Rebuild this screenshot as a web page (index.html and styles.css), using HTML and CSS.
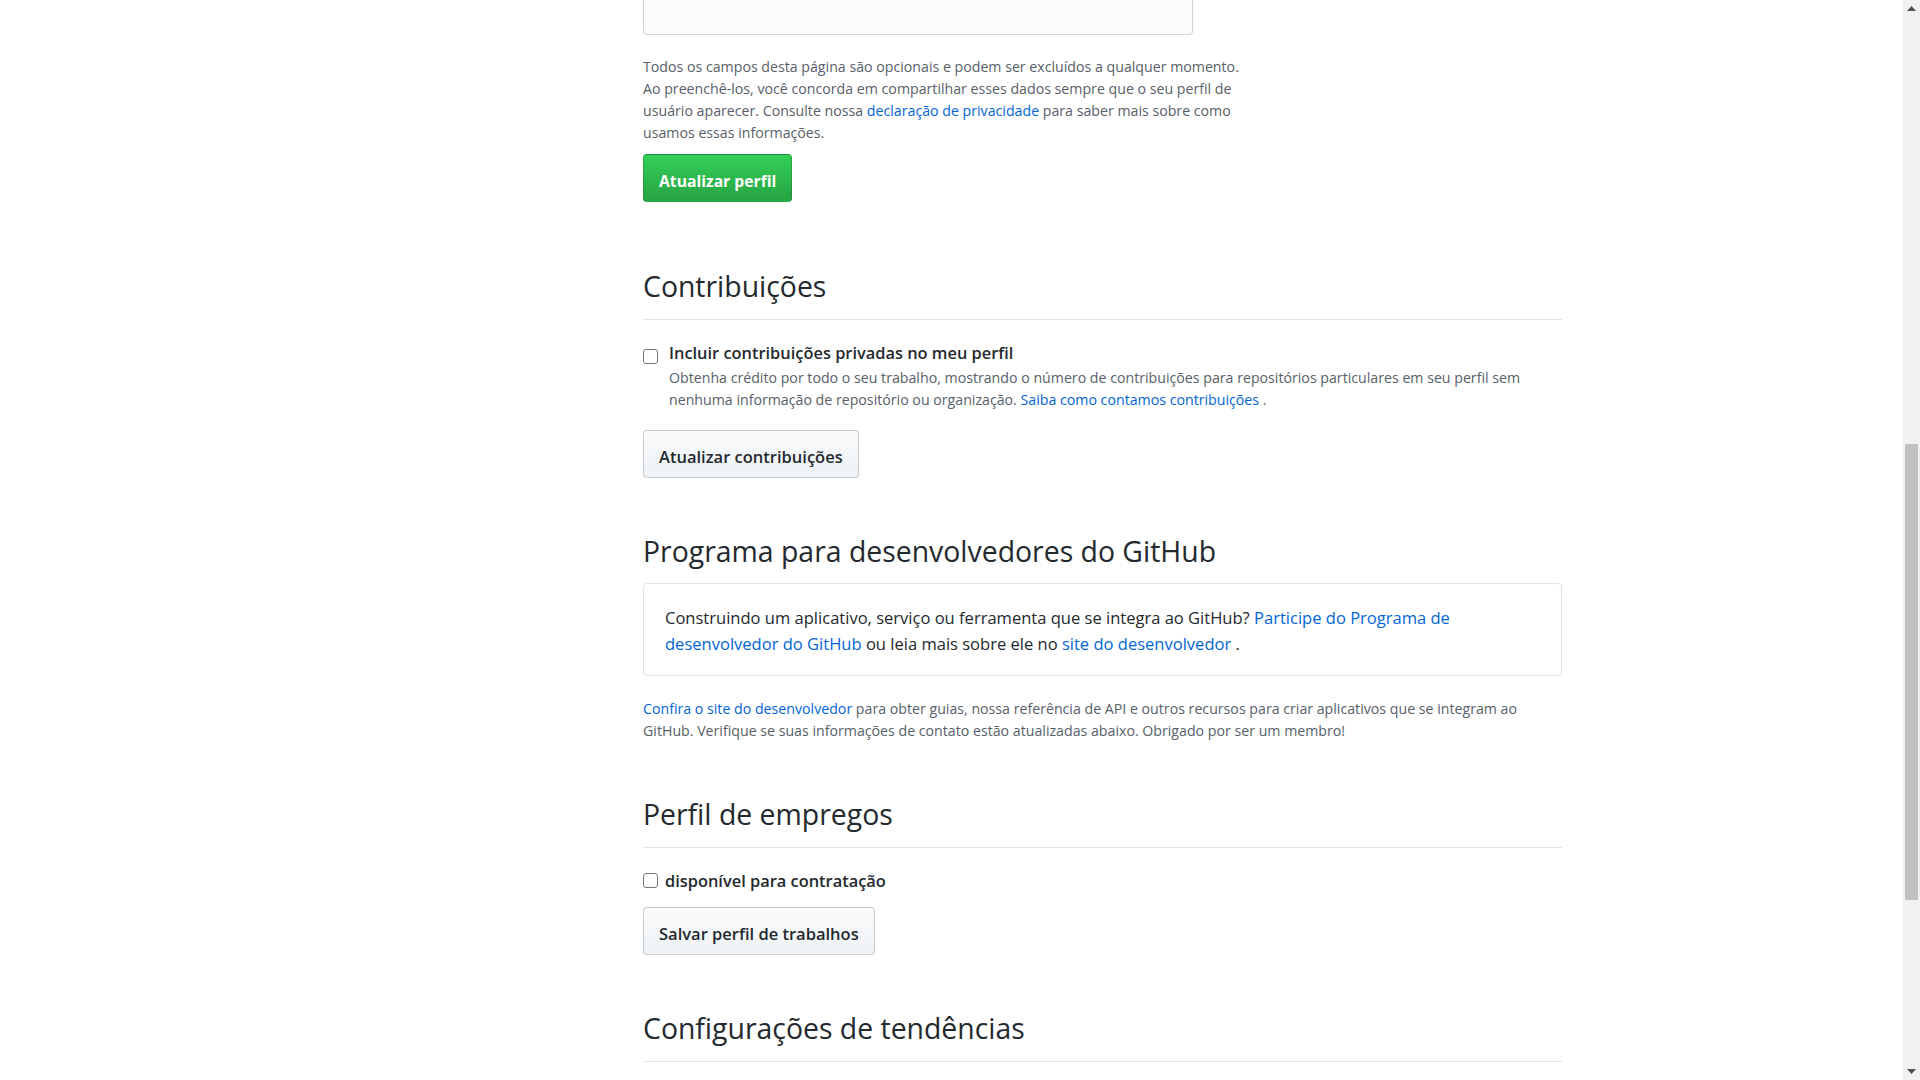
FILE: index.html
```html
<!DOCTYPE html>
<html lang="pt-BR">
<head>
<meta charset="utf-8">
<title>Configurações do perfil</title>
<link rel="stylesheet" href="styles.css">
</head>
<body>
<div class="window">
  <div class="page">
    <div class="layout">
      <div class="sidebar"></div>
      <main class="main">
        <div class="field-tail"></div>
        <p class="note first-note">Todos os campos desta página são opcionais e podem ser excluídos a qualquer momento.<br>Ao preenchê-los, você concorda em compartilhar esses dados sempre que o seu perfil de<br>usuário aparecer. Consulte nossa <a href="#">declaração de privacidade</a> para saber mais sobre como<br>usamos essas informações.</p>
        <button class="btn btn-primary btn-update">Atualizar perfil</button>

        <h2 class="subhead sec-contrib">Contribuições</h2>
        <div class="check-row">
          <input type="checkbox" class="checkbox">
          <div class="check-body">
            <label class="check-label">Incluir contribuições privadas no meu perfil</label>
            <p class="note desc">Obtenha crédito por todo o seu trabalho, mostrando o número de contribuições para repositórios particulares em seu perfil sem<br>nenhuma informação de repositório ou organização. <a href="#">Saiba como contamos contribuições</a> .</p>
          </div>
        </div>
        <button class="btn btn-contrib">Atualizar contribuições</button>

        <h2 class="subhead plain sec-dev">Programa para desenvolvedores do GitHub</h2>
        <div class="box">Construindo um aplicativo, serviço ou ferramenta que se integra ao GitHub? <a href="#">Participe do Programa de<br>desenvolvedor do GitHub</a> ou leia mais sobre ele no <a href="#">site do desenvolvedor</a> .</div>
        <p class="note dev-note"><a href="#">Confira o site do desenvolvedor</a> para obter guias, nossa referência de API e outros recursos para criar aplicativos que se integram ao<br>GitHub. Verifique se suas informações de contato estão atualizadas abaixo. Obrigado por ser um membro!</p>

        <h2 class="subhead sec-jobs">Perfil de empregos</h2>
        <label class="check-inline"><input type="checkbox" class="checkbox">disponível para contratação</label>
        <button class="btn btn-jobs">Salvar perfil de trabalhos</button>

        <h2 class="subhead sec-trend">Configurações de tendências</h2>
      </main>
    </div>
  </div>
  <div class="scrollbar">
    <div class="sb-arrow">
      <svg width="9" height="5" viewBox="0 0 9 5"><path d="M4.5 0 L9 5 L0 5 Z" fill="#505050"/></svg>
    </div>
    <div class="sb-track">
      <div class="sb-thumb"></div>
    </div>
    <div class="sb-arrow">
      <svg width="9" height="5" viewBox="0 0 9 5"><path d="M0 0 L9 0 L4.5 5 Z" fill="#505050"/></svg>
    </div>
  </div>
</div>
</body>
</html>
```
FILE: styles.css
```css
* { box-sizing: border-box; }
html, body { margin: 0; padding: 0; background: #fff; }
body {
  font-family: "Open Sans", "Noto Sans", sans-serif;
  color: #24292e;
}
.window {
  display: flex;
  height: 1080px;
  overflow: hidden;
}
.page { flex: 1; }
.layout {
  display: grid;
  grid-template-columns: 643px 919px;
}
.main {
  display: flex;
  flex-direction: column;
  align-items: flex-start;
}
a { color: #0366d6; text-decoration: none; }

.field-tail {
  width: 550px;
  height: 35px;
  background: #fafbfc;
  border: 1px solid #d1d5da;
  border-top: none;
  border-radius: 0 0 4px 4px;
}
.note {
  margin: 0;
  font-size: 14.18px;
  line-height: 22px;
  color: #586069;
}
.first-note { margin-top: 21px; }

.btn {
  font-family: inherit;
  font-size: 16.5px;
  font-weight: 600;
  line-height: 22px;
  padding: 15px 15px 9px;
  border: 1px solid rgba(27,31,35,0.2);
  border-radius: 4px;
  color: #24292e;
  background: linear-gradient(#fafbfc, #eff3f6 90%);
  cursor: pointer;
}
.btn-primary {
  color: #fff;
  font-size: 15.7px;
  font-weight: 700;
  background: linear-gradient(#34d058, #28a745 90%);
}
.btn-update { margin-top: 10px; }
.btn-contrib { margin-top: 19px; }
.btn-jobs { margin-top: 15px; }

.subhead {
  align-self: stretch;
  margin: 0;
  font-size: 28.4px;
  font-weight: 400;
  line-height: 38px;
  padding-bottom: 14px;
  border-bottom: 1px solid #e1e4e8;
}
.subhead.plain { padding-bottom: 0; border-bottom: none; }
.sec-contrib { margin-top: 65px; }
.sec-dev { margin-top: 54px; }
.sec-jobs { margin-top: 53px; }
.sec-trend { margin-top: 54px; }

.checkbox {
  appearance: none;
  -webkit-appearance: none;
  width: 15px;
  height: 15px;
  margin: 0;
  border: 1px solid #767676;
  border-radius: 3px;
  background: #fff;
  flex: none;
}
.check-row {
  align-self: stretch;
  display: flex;
  margin-top: 22px;
}
.check-row .checkbox { margin-top: 7px; margin-right: 11px; }
.check-label {
  display: block;
  font-size: 16.4px;
  font-weight: 600;
  line-height: 22px;
}
.desc { margin-top: 3px; }

.box {
  align-self: stretch;
  margin-top: 13px;
  border: 1px solid #e1e4e8;
  border-radius: 4px;
  padding: 21px 21px 18px;
  font-size: 16.55px;
  line-height: 26px;
}
.dev-note { margin-top: 22px; }

.check-inline {
  display: flex;
  align-items: center;
  margin-top: 22px;
  font-size: 16.4px;
  font-weight: 600;
  line-height: 22px;
}
.check-inline .checkbox { margin-right: 7px; margin-top: -2px; }

.scrollbar {
  width: 17px;
  flex: none;
  background: #f1f1f1;
  display: flex;
  flex-direction: column;
}
.sb-arrow {
  height: 17px;
  display: flex;
  align-items: center;
  justify-content: center;
}
.sb-track {
  flex: 1;
  padding-top: 427px;
}
.sb-thumb {
  margin: 0 2px;
  height: 456px;
  background: #c1c1c1;
}
```
